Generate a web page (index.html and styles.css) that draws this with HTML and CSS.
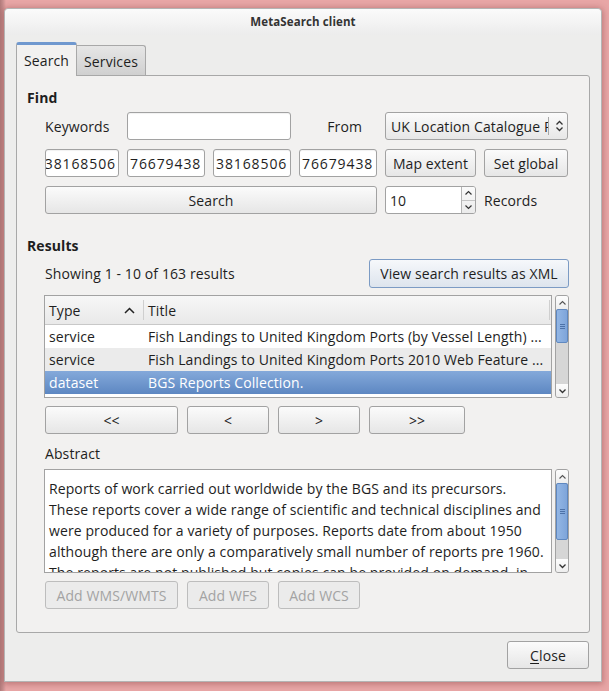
FILE: index.html
```html
<!DOCTYPE html>
<html>
<head>
<meta charset="utf-8">
<title>MetaSearch client</title>
<link rel="stylesheet" href="styles.css">
</head>
<body>
<div class="window">
  <div class="titlebar">MetaSearch client</div>
  <div class="content">
    <div class="tabs">
      <div class="tab active">Search</div>
      <div class="tab">Services</div>
    </div>
    <div class="panel">
      <div class="heading">Find</div>
      <div class="section">
        <div class="findgrid">
          <div class="label">Keywords</div>
          <div class="field kw"></div>
          <div class="label from">From</div>
          <div class="combo">
            <span class="combo-text">UK Location Catalogue Publishing Service</span>
            <span class="combo-sep"></span>
            <svg class="combo-icon" width="9" height="12" viewBox="0 0 9 12"><path d="M1.5 4.5 L4.5 1.5 L7.5 4.5 M1.5 7.5 L4.5 10.5 L7.5 7.5" fill="none" stroke="#333" stroke-width="1.3"/></svg>
          </div>
          <div class="field num scrolled"><span>38168506</span></div>
          <div class="field num"><span>76679438</span></div>
          <div class="field num"><span>38168506</span></div>
          <div class="field num"><span>76679438</span></div>
          <div class="btn">Map extent</div>
          <div class="btn">Set global</div>
          <div class="btn search">Search</div>
          <div class="spin">
            <div class="spin-text">10</div>
            <div class="spin-arrows">
              <div class="spin-a"><svg width="9" height="6" viewBox="0 0 9 6"><path d="M1.5 4.5 L4.5 1.5 L7.5 4.5" fill="none" stroke="#333" stroke-width="1.2"/></svg></div>
              <div class="spin-a"><svg width="9" height="6" viewBox="0 0 9 6"><path d="M1.5 1.5 L4.5 4.5 L7.5 1.5" fill="none" stroke="#333" stroke-width="1.2"/></svg></div>
            </div>
          </div>
          <div class="label records">Records</div>
        </div>
      </div>

      <div class="heading results-h">Results</div>
      <div class="section">
        <div class="showing-row">
          <div class="label">Showing 1 - 10 of 163 results</div>
          <div class="btn xml">View search results as XML</div>
        </div>
        <div class="scrollarea table-area">
          <div class="table">
            <div class="thead">
              <div class="c-type">Type<svg class="sort" width="11" height="7" viewBox="0 0 11 7"><path d="M1 6 L5.5 1.5 L10 6" fill="none" stroke="#222" stroke-width="1.5"/></svg></div>
              <div class="c-title">Title</div>
            </div>
            <div class="tr">
              <div class="c-type">service</div>
              <div class="c-title">Fish Landings to United Kingdom Ports (by Vessel Length) ...</div>
            </div>
            <div class="tr alt">
              <div class="c-type">service</div>
              <div class="c-title">Fish Landings to United Kingdom Ports 2010 Web Feature ...</div>
            </div>
            <div class="tr sel">
              <div class="c-type">dataset</div>
              <div class="c-title">BGS Reports Collection.</div>
            </div>
          </div>
          <div class="vscroll">
            <div class="sb-btn"><svg width="9" height="6" viewBox="0 0 9 6"><path d="M1.5 4.5 L4.5 1.5 L7.5 4.5" fill="none" stroke="#555" stroke-width="1.1"/></svg></div>
            <div class="sb-thumb t1"><svg width="5" height="7" viewBox="0 0 5 7"><path d="M0 1.5 H5 M0 3.5 H5 M0 5.5 H5" stroke="#4d72a8" stroke-width="1"/></svg></div>
            <div class="sb-track"></div>
            <div class="sb-btn"><svg width="9" height="6" viewBox="0 0 9 6"><path d="M1.5 1.5 L4.5 4.5 L7.5 1.5" fill="none" stroke="#333" stroke-width="1.3"/></svg></div>
          </div>
        </div>
        <div class="btnrow pager">
          <div class="btn w1">&lt;&lt;</div>
          <div class="btn w2">&lt;</div>
          <div class="btn w2">&gt;</div>
          <div class="btn w3">&gt;&gt;</div>
        </div>
        <div class="label abstract-l">Abstract</div>
        <div class="scrollarea abstract-area">
          <div class="textbox">Reports of work carried out worldwide by the BGS and its precursors.<br>These reports cover a wide range of scientific and technical disciplines and<br>were produced for a variety of purposes. Reports date from about 1950<br>although there are only a comparatively small number of reports pre 1960.<br>The reports are not published but copies can be provided on demand, in</div>
          <div class="vscroll">
            <div class="sb-btn"><svg width="9" height="6" viewBox="0 0 9 6"><path d="M1.5 4.5 L4.5 1.5 L7.5 4.5" fill="none" stroke="#555" stroke-width="1.1"/></svg></div>
            <div class="sb-thumb t2"><svg width="5" height="7" viewBox="0 0 5 7"><path d="M0 1.5 H5 M0 3.5 H5 M0 5.5 H5" stroke="#4d72a8" stroke-width="1"/></svg></div>
            <div class="sb-track"></div>
            <div class="sb-btn"><svg width="9" height="6" viewBox="0 0 9 6"><path d="M1.5 1.5 L4.5 4.5 L7.5 1.5" fill="none" stroke="#333" stroke-width="1.3"/></svg></div>
          </div>
        </div>
        <div class="btnrow adds">
          <div class="btn w1 disabled">Add WMS/WMTS</div>
          <div class="btn w2 disabled">Add WFS</div>
          <div class="btn w2 disabled">Add WCS</div>
        </div>
      </div>
    </div>
    <div class="bottom">
      <div class="btn close"><u>C</u>lose</div>
    </div>
  </div>
</div>
</body>
</html>
```

FILE: styles.css
```css
* { box-sizing: border-box; }
html, body { margin: 0; }
body {
  width: 609px;
  height: 691px;
  overflow: hidden;
  padding: 8px 7px 9px 4px;
  background: linear-gradient(to right, #b07a7a 0, #c88e8e 3px, #e8a6a6 6px, #e8a6a6 100%);
  font-family: "Open Sans", "DejaVu Sans", sans-serif;
  font-size: 14px;
  letter-spacing: 0.1px;
  color: #1e1e1e;
}
.window {
  width: 598px;
  height: 674px;
  background: #ededec;
  border: 1px solid #b4b4b4;
  border-radius: 4px 4px 0 0;
  box-shadow: 0 1px 6px 1px rgba(130, 60, 60, 0.45);
  display: flex;
  flex-direction: column;
}
.titlebar {
  flex: none;
  height: 26px;
  background: linear-gradient(#fbfbfb, #ececec);
  border-radius: 4px 4px 0 0;
  display: flex;
  align-items: center;
  justify-content: center;
  font-weight: bold;
  font-size: 11.5px;
  letter-spacing: 0.1px;
  color: #333;
  padding-bottom: 2px;
}
.content {
  flex: 1;
  padding: 7px 11px 0 11px;
  display: flex;
  flex-direction: column;
}
.tabs {
  display: flex;
  align-items: flex-end;
  height: 34px;
  margin-bottom: -1px;
  position: relative;
  z-index: 1;
}
.tab {
  height: 30px;
  width: 69px;
  margin-bottom: 1px;
  border: 1px solid #a8a8a8;
  border-left: none;
  border-bottom: none;
  border-radius: 0 3px 0 0;
  background: linear-gradient(#e6e6e6, #d0d0d0);
  display: flex;
  align-items: center;
  justify-content: center;
  padding-top: 2px;
}
.tab.active {
  height: 34px;
  width: 61px;
  margin-bottom: 0;
  border: 1px solid #a8a8a8;
  border-top: 3px solid #6f98cf;
  border-bottom: none;
  border-radius: 3px 3px 0 0;
  background: #f2f1f0;
  padding-top: 0;
  padding-bottom: 1px;
}
.panel {
  flex: none;
  height: 558px;
  background: #f2f1f0;
  border: 1px solid #a8a8a8;
  border-radius: 0 3px 3px 3px;
  padding: 12px 20px 0 10px;
}
.heading {
  font-weight: bold;
  height: 20px;
  line-height: 20px;
}
.results-h { margin-top: 22px; }
.section {
  padding-left: 18px;
}
.label {
  display: flex;
  align-items: center;
  white-space: nowrap;
}
.findgrid {
  margin-top: 4px;
  display: grid;
  grid-template-columns: 74px 78px 78px 78px 91px 84px;
  grid-template-rows: 28px 28px 28px;
  column-gap: 8px;
  row-gap: 9px;
}
.field {
  background: #fff;
  border: 1px solid #a2a2a2;
  border-radius: 3px;
  box-shadow: inset 0 1px 1px rgba(0,0,0,0.06);
  overflow: hidden;
  white-space: nowrap;
  display: flex;
  align-items: center;
  padding: 0 3px;
}
.field.num { letter-spacing: 0.9px; padding-left: 2px; }
.field.kw { grid-column: 2 / 4; }
.field.scrolled { justify-content: flex-end; padding: 0 2px 0 0; }
.label.from { justify-content: flex-end; padding-right: 15px; }
.combo {
  grid-column: 5 / 7;
  display: flex;
  align-items: center;
  border: 1px solid #a2a2a2;
  border-radius: 3px;
  background: linear-gradient(#fbfbfb, #e7e7e7);
  padding-left: 5px;
  overflow: hidden;
}
.combo-text {
  width: 157px;
  overflow: hidden;
  white-space: nowrap;
}
.combo-sep {
  width: 1px;
  height: 18px;
  background: #a8a8a8;
  margin-right: 6px;
}
.combo-icon { flex: none; }
.btn {
  display: flex;
  align-items: center;
  justify-content: center;
  white-space: nowrap;
  border: 1px solid #a2a2a2;
  border-radius: 3px;
  background: linear-gradient(#fbfbfb, #e6e6e6);
  color: #1e1e1e;
}
.btn.search { grid-column: 1 / 5; }
.spin {
  display: flex;
  border: 1px solid #a2a2a2;
  border-radius: 3px;
  background: #fff;
  overflow: hidden;
}
.spin-text {
  flex: 1;
  display: flex;
  align-items: center;
  padding-left: 4px;
}
.spin-arrows {
  width: 14px;
  border-left: 1px solid #b5b5b5;
  display: flex;
  flex-direction: column;
  background: linear-gradient(#fafafa, #ebebeb);
}
.spin-a {
  flex: 1;
  display: flex;
  align-items: center;
  justify-content: center;
}
.spin-a + .spin-a { border-top: 1px solid #c4c4c4; }
.label.records { grid-column: 6; }
.showing-row {
  margin-top: 3px;
  height: 29px;
  display: flex;
  justify-content: space-between;
}
.btn.xml {
  width: 200px;
  border-color: #7c9bc4;
  background: linear-gradient(#f6f8fb, #dde4ed);
}
.scrollarea {
  display: flex;
  gap: 3px;
  margin-left: -1px;
}
.table-area { margin-top: 7px; height: 103px; }
.table {
  flex: 1;
  background: #fff;
  border: 1px solid #a2a2a2;
  overflow: hidden;
}
.thead {
  height: 29px;
  display: flex;
  background: linear-gradient(#f7f7f7, #e9e9e9);
  border-bottom: 1px solid #c8c8c8;
}
.tr {
  height: 23px;
  display: flex;
  white-space: nowrap;
}
.tr.alt { background: #ebebeb; }
.tr.sel {
  background: linear-gradient(#84a9da, #5d87c2);
  color: #fff;
}
.c-type {
  width: 99px;
  flex: none;
  padding-left: 4px;
  display: flex;
  align-items: center;
}
.thead .c-type {
  justify-content: space-between;
  padding-right: 8px;
  border-right: 1px solid #cfcfcf;
  margin: 4px 0;
}
.c-title {
  flex: 1;
  padding-left: 4px;
  display: flex;
  align-items: center;
  overflow: hidden;
}
.thead .c-title {
  border-right: 1px solid #cfcfcf;
  margin: 4px 1px 4px 0;
}
.vscroll {
  width: 14px;
  flex: none;
  border: 1px solid #a2a2a2;
  border-radius: 3px;
  background: #d6d6d6;
  display: flex;
  flex-direction: column;
  overflow: hidden;
}
.sb-btn {
  height: 13px;
  flex: none;
  display: flex;
  align-items: center;
  justify-content: center;
  background: linear-gradient(#fdfdfd, #eeeeee);
}
.sb-thumb {
  flex: none;
  background: linear-gradient(to right, #93b6e4, #7ea5da);
  border: 1px solid #5f88c0;
  border-radius: 2px;
  display: flex;
  align-items: center;
  justify-content: center;
}
.sb-thumb.t1 { height: 34px; }
.sb-thumb.t2 { height: 57px; }
.sb-track { flex: 1; }
.btnrow {
  display: flex;
  gap: 9px;
  height: 28px;
}
.pager { margin-top: 8px; }
.w1 { width: 133px; }
.w2 { width: 82px; }
.w3 { width: 96px; }
.abstract-l { margin-top: 9px; height: 20px; }
.abstract-area { margin-top: 6px; height: 104px; }
.textbox {
  flex: 1;
  background: #fff;
  border: 1px solid #a2a2a2;
  overflow: hidden;
  white-space: nowrap;
  line-height: 21px;
  padding: 8px 4px 0 4px;
}
.adds { margin-top: 8px; }
.btn.disabled {
  color: #a3a3a3;
  background: #ebebeb;
  border-color: #bdbdbd;
}
.bottom {
  margin-top: 8px;
  display: flex;
  justify-content: flex-end;
  padding-right: 1px;
}
.btn.close {
  width: 82px;
  height: 28px;
}
.btn.close u { text-decoration-thickness: 1px; text-underline-offset: 2px; }
```
